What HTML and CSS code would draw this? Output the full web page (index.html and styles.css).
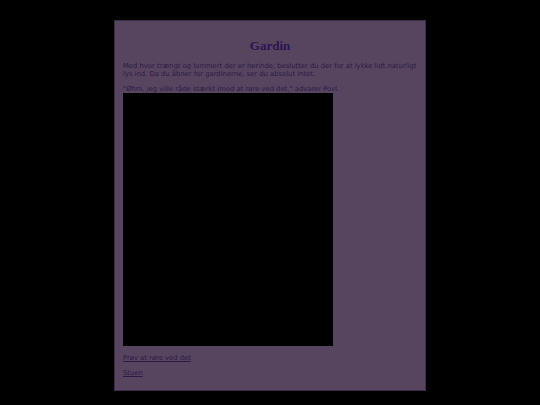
FILE: index.html
```html
<!DOCTYPE html>
<html lang="da">
<head>
<meta charset="utf-8">
<title>Gardin</title>
<link rel="stylesheet" href="styles.css">
</head>
<body>
<div class="page">
  <h1 class="title">Gardin</h1>
  <p class="text">Med hvor trængt og lummert der er herinde, beslutter du der for at lykke lidt naturligt lys ind. Da du åbner for gardinerne, ser du absolut intet.</p>
  <p class="text quote">"Øhm, jeg ville råde stærkt imod at røre ved det," advarer Povl.</p>
  <div class="view"></div>
  <p class="text link-row"><a class="link" href="#">Prøv at røre ved det</a></p>
  <p class="text link-row"><a class="link" href="#">Stuen</a></p>
</div>
</body>
</html>
```
FILE: styles.css
```css
html, body {
  margin: 0;
  padding: 0;
  background: #000;
}
.page {
  box-sizing: border-box;
  width: 312px;
  height: 371px;
  margin: 20px 0 0 114px;
  padding: 1px 4px 0 8px;
  background: #574560;
  border: 1px solid #3a2d47;
  color: #2b1a44;
  font-family: "DejaVu Sans", Verdana, sans-serif;
  font-size: 6.8px;
  line-height: 8px;
}
.title {
  margin: 16px 4px 8px 0;
  text-align: center;
  font-family: "Liberation Serif", "Times New Roman", serif;
  font-size: 13px;
  line-height: 16px;
  font-weight: bold;
  color: #2b1550;
}
.text {
  margin: 0 0 7px 0;
}
.quote {
  margin-bottom: 0;
}
.view {
  width: 210px;
  height: 253px;
  background: #000;
  margin-bottom: 8px;
}
.link-row {
  margin-bottom: 7px;
}
.link {
  color: #2b1a44;
  text-decoration: underline;
}
```
